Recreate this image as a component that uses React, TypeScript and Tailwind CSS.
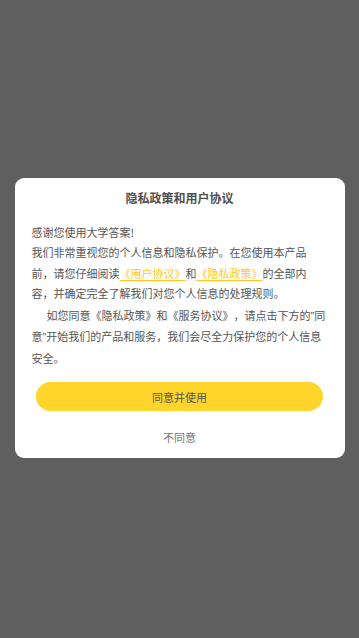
export default function App() {
  return (
    <div
      className="w-[359px] h-[638px] bg-[#5f5f5f] flex items-center justify-center"
      style={{ fontFamily: '"Noto Sans CJK SC", "Noto Sans", sans-serif' }}
    >
      <div className="w-[330px] mt-[-2px] bg-white rounded-[9px] pt-[12px] pb-[13px] [text-spacing-trim:space-all]">
        <h2 className="text-center text-[12px] leading-[16px] font-bold text-[#505050]">隐私政策和用户协议</h2>
        <div className="mt-[16px] px-[17px] text-[11px] leading-[20.5px] text-[#555]">
          <p>感谢您使用大学答案!</p>
          <p>
            我们非常重视您的个人信息和隐私保护。在您使用本产品前，请您仔细阅读
            <span className="text-[#ffc61e] underline underline-offset-2">《用户协议》</span>
            和
            <span className="text-[#ffc61e] underline underline-offset-2">《隐私政策》</span>
            的全部内容，并确定完全了解我们对您个人信息的处理规则。
          </p>
          <p className="mt-px indent-[15px]">
            如您同意《隐私政策》和《服务协议》，请点击下方的
            <span className="font-['Liberation_Sans']">”</span>同意
            <span className="font-['Liberation_Sans']">”</span>
            开始我们的产品和服务，我们会尽全力保护您的个人信息安全。
          </p>
        </div>
        <button className="mt-[14px] mx-auto block w-[287px] h-[29px] rounded-full bg-[#ffd52b] text-[11px] text-[#555]">
          同意并使用
        </button>
        <div className="mt-[18px] text-center text-[11px] leading-[16px] text-[#777]">不同意</div>
      </div>
    </div>
  );
}
